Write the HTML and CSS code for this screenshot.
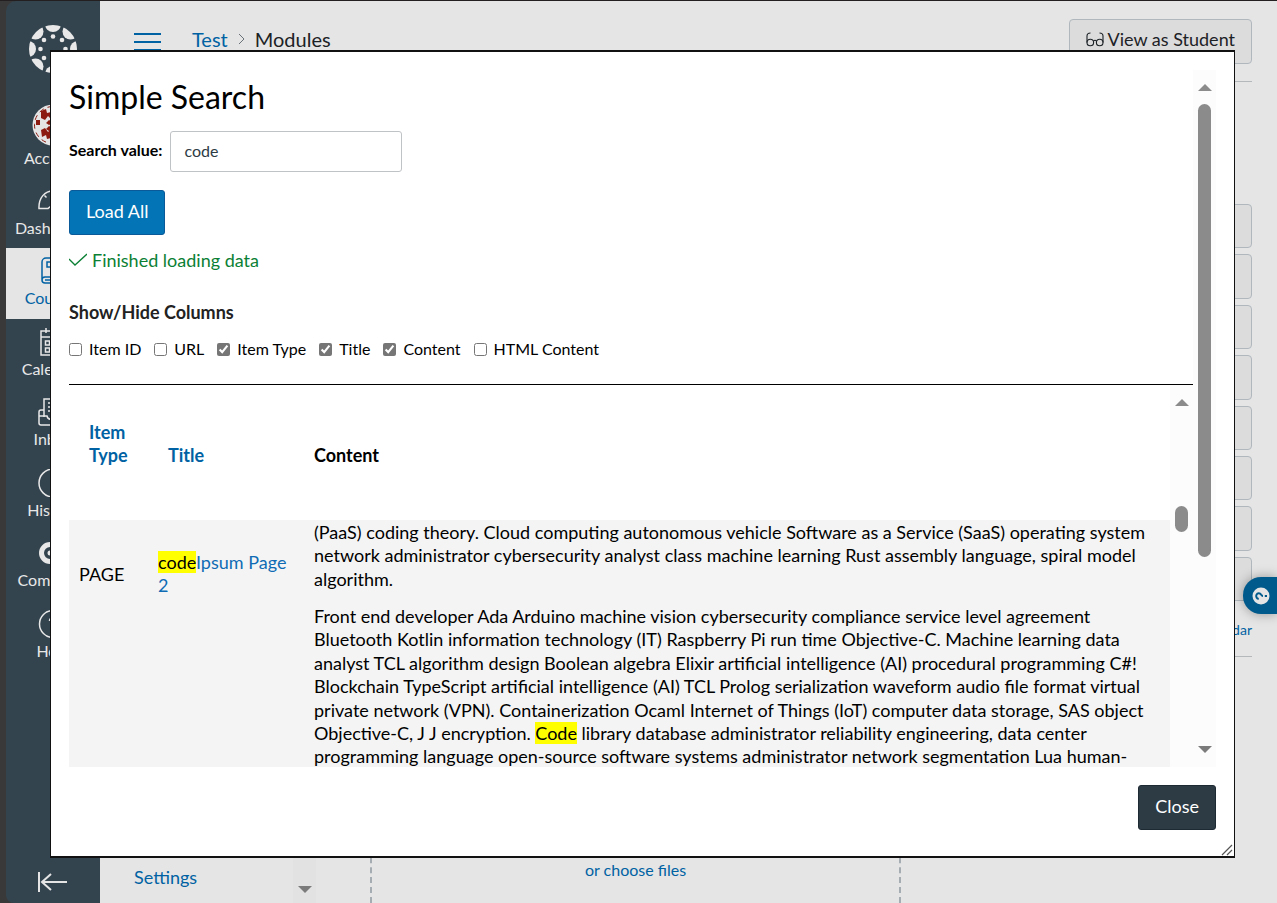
FILE: index.html
```html
<!DOCTYPE html>
<html lang="en">
<head>
<meta charset="utf-8">
<title>Test: Modules</title>
<link rel="stylesheet" href="styles.css">
</head>
<body>
<div class="page">
  <nav class="sidebar" aria-label="Global navigation">
    <a class="logo" href="#" aria-label="Home">
      <svg width="50" height="50" viewBox="-25 -25 50 50" fill="currentColor">
        <defs><clipPath id="disc"><circle r="24"/></clipPath></defs>
        <g clip-path="url(#disc)">
          <circle cy="-25" r="8"/><circle cy="25" r="8"/><circle cx="-25" r="8"/><circle cx="25" r="8"/>
          <circle cx="-17.5" cy="-17.5" r="8"/><circle cx="17.5" cy="-17.5" r="8"/><circle cx="-17.5" cy="17.5" r="8"/><circle cx="17.5" cy="17.5" r="8"/>
        </g>
        <circle cy="-12.5" r="2.3"/><circle cy="12.5" r="2.3"/><circle cx="-12.5" r="2.3"/><circle cx="12.5" r="2.3"/>
        <circle cx="-9" cy="-9" r="2.3"/><circle cx="9" cy="-9" r="2.3"/><circle cx="-9" cy="9" r="2.3"/><circle cx="9" cy="9" r="2.3"/>
      </svg>
    </a>
    <a class="account" href="#">
      <svg width="42" height="42" viewBox="0 0 42 42">
        <circle cx="21" cy="21" r="20.5" fill="#e5e5e5"/>
        <circle cx="21" cy="21" r="18.5" fill="none" stroke="#8c1c12" stroke-width="1" stroke-dasharray="5 4"/>
        <g fill="#8c1c12"><path d="M4 16h4v5H4zM9 7l5-2 1 4 4-1v7l-3-3-3 4-4-2zM9 26l4-2 3 4 3-3v9l-4 1-1-4-4 2zM17 16l2 1v3l-2 1-3-2zM17 22l2 1v3l-2 1-3-2z"/><path d="M38 16h-4v5h4zM33 7l-5-2-1 4-4-1v7l3-3 3 4 4-2zM33 26l-4-2-3 4-3-3v9l4 1 1-4 4 2z"/></g>
      </svg>
      <span>Account</span>
    </a>
    <div class="nav-items">
      <a class="nav-item" href="#">
        <svg viewBox="0 0 30 28"><path d="M1 21.500c-.5-11 6-17.500 14-17.500s14.500 6.500 14 17.500h-9c-2-3-8-3-10 0zM15 4v4M6.500 8.500l2 2M23.500 8.500l-2 2M15 19l4-7"/></svg>
        <span>Dashboard</span></a>
      <a class="nav-item active" href="#">
        <svg viewBox="0 0 30 28"><path d="M26 20V1H8a4 4 0 0 0-4 4v18a3 3 0 0 0 3 3h19v-6H7a3 3 0 0 0-3 3M14 5H9v5h4v4M18 5v9h-5M7 23h16"/></svg>
        <span>Courses</span></a>
      <a class="nav-item" href="#">
        <svg viewBox="0 0 30 28"><path d="M3 3h24v24H3zM3 9h24M8 0v5M22 0v5M7.500 13h4v4h-4zM7.500 20h4v4h-4zM14 13h4v4h-4zM14 20h4v4h-4zM20.500 13h4v4h-4z"/></svg>
        <span>Calendar</span></a>
      <a class="nav-item" href="#">
        <svg viewBox="0 0 30 28"><path d="M6 19V1h18v18M6 12H3a2 2 0 0 0-2 2v11a2 2 0 0 0 2 2h24a2 2 0 0 0 2-2V14a2 2 0 0 0-2-2h-3M1 18h8c1 5 11 5 12 0h8M10 5h10M10 9h10M10 13h10"/></svg>
        <span>Inbox</span></a>
      <a class="nav-item" href="#">
        <svg viewBox="0 0 30 28"><circle cx="15" cy="14" r="14"/><path d="M15 6v8l6 4"/></svg>
        <span>History</span></a>
      <a class="nav-item" href="#">
        <svg viewBox="0 0 30 28"><circle cx="12" cy="14" r="8.500" stroke-width="5"/><circle cx="12" cy="14" r="2.500" fill="currentColor" stroke="none"/><path d="M22 14h7" stroke-width="4"/></svg>
        <span>Commons</span></a>
      <a class="nav-item" href="#">
        <svg viewBox="0 0 30 28"><circle cx="15" cy="14" r="13.500"/><path d="M11.500 11a4 4 0 1 1 4 4v3M15.500 20v2"/></svg>
        <span>Help</span></a>
    </div>
    <button class="collapse" type="button" aria-label="Minimize global navigation">
      <svg width="30" height="22" viewBox="0 0 30 22"><path d="M1 1v20M4 11h25M13 3l-9 8 9 8"/></svg>
    </button>
  </nav>

  <main class="main">
    <header class="topbar">
      <button class="burger" type="button" aria-label="Course navigation"><i></i><i></i><i></i></button>
      <nav class="crumbs" aria-label="Breadcrumb">
        <a href="#">Test</a>
        <svg width="7" height="12" viewBox="0 0 7 12"><path d="M1 1l5 5-5 5"/></svg>
        <span>Modules</span>
      </nav>
      <button class="student" type="button">
        <svg width="18" height="15" viewBox="0 0 18 15"><path d="M1 10.500V4c0-2 1-3 3.500-3M17 10.500V4c0-2-1-3-3.500-3M7.500 9c1-1 2-1 3 0"/><circle cx="4.300" cy="10.500" r="3.300"/><circle cx="13.700" cy="10.500" r="3.300"/></svg>
        View as Student
      </button>
    </header>
    <div class="columns">
      <div class="course-nav">
        <a href="#">Settings</a>
        <div class="nav-track"><i class="arrow down"></i></div>
      </div>
      <div class="dropzone"><a href="#">or choose files</a></div>
      <aside class="actions">
        <div class="action-list">
          <button type="button" aria-label="View Course Stream"></button>
          <button type="button" aria-label="New Analytics"></button>
          <button type="button" aria-label="Course Calendar"></button>
          <button type="button" aria-label="Course Notifications"></button>
          <button type="button" aria-label="Import"></button>
          <button type="button" aria-label="Export"></button>
          <button type="button" aria-label="Publish"></button>
          <button type="button" aria-label="Course Setup"></button>
        </div>
        <a class="calendar" href="#">View Calendar</a>
      </aside>
    </div>
  </main>
</div>

<button class="help-tab" type="button" aria-label="Support">
  <svg width="18" height="18" viewBox="-9 -9 18 18"><circle r="8.500" fill="#e5e5e5"/><path transform="rotate(-90)" d="M-2.800 -2.200a2.800 2.600 0 1 1 4.300 2.200c-1.200.8-1.500 1-1.500 2M0 3.800v2.200" fill="none" stroke="#005a8c" stroke-width="2"/></svg>
</button>

<section class="dialog" role="dialog" aria-labelledby="dlg-title">
  <div class="scroller">
    <div class="content">
      <h2 id="dlg-title">Simple Search</h2>
      <div class="field">
        <label for="q">Search value:</label>
        <input id="q" type="text" value="code">
      </div>
      <button class="btn primary" type="button">Load All</button>
      <p class="status">
        <svg width="18" height="18" viewBox="0 0 18 18"><path d="M0 7l6 6L18 2"/></svg>
        Finished loading data
      </p>
      <h3>Show/Hide Columns</h3>
      <div class="checks">
        <label><input type="checkbox">Item ID</label>
        <label><input type="checkbox">URL</label>
        <label><input type="checkbox" checked>Item Type</label>
        <label><input type="checkbox" checked>Title</label>
        <label><input type="checkbox" checked>Content</label>
        <label><input type="checkbox">HTML Content</label>
      </div>
      <div class="results">
        <div class="table-view">
          <table>
            <colgroup><col class="c-type"><col class="c-title"><col></colgroup>
            <thead><tr>
              <th><a href="#">Item Type</a></th>
              <th><a href="#">Title</a></th>
              <th>Content</th>
            </tr></thead>
            <tbody><tr>
              <td class="type">PAGE</td>
              <td class="title"><a href="#"><mark>code</mark>Ipsum Page 2</a></td>
              <td class="text">
                <p>(PaaS) coding theory. Cloud computing autonomous vehicle Software as a Service (SaaS) operating system network administrator cybersecurity analyst class machine learning Rust assembly language, spiral model algorithm.</p>
                <p>Front end developer Ada Arduino machine vision cybersecurity compliance service level agreement Bluetooth Kotlin information technology (IT) Raspberry Pi run time Objective-C. Machine learning data analyst TCL algorithm design Boolean algebra Elixir artificial intelligence (AI) procedural programming C#! Blockchain TypeScript artificial intelligence (AI) TCL Prolog serialization waveform audio file format virtual private network (VPN). Containerization Ocaml Internet of Things (IoT) computer data storage, SAS object Objective-C, J J encryption. <mark>Code</mark> library database administrator reliability engineering, data center programming language open-source software systems administrator network segmentation Lua human-</p>
              </td>
            </tr></tbody>
          </table>
        </div>
        <div class="track inner"><i class="arrow up"></i><i class="thumb"></i></div>
      </div>
    </div>
    <div class="track outer"><i class="arrow up"></i><i class="thumb"></i><i class="arrow down"></i></div>
  </div>
  <footer><button class="btn dark" type="button">Close</button></footer>
  <svg class="grip" width="12" height="12" viewBox="0 0 12 12"><path d="M1 11L11 1M6 11l5-5"/></svg>
</section>
</body>
</html>
```

FILE: styles.css
```css
* { box-sizing: border-box; }
body {
  margin: 0;
  height: 100vh;
  overflow: hidden;
  background: #393939;
  color: #000;
  font: 18px/1.3 Lato, "Liberation Sans", sans-serif;
}
a { color: #0062a3; text-decoration: none; }
button { font: inherit; }
svg { display: block; flex: none; }
h2, h3, p { margin: 0; }

.page { display: flex; height: 100vh; padding-left: 6px; border-top: 1px solid #231f20; }

/* Global navigation */
.sidebar {
  display: flex;
  flex-direction: column;
  width: 94px;
  background: #34444f;
  border-radius: 10px 0 0 8px;
  font-size: 16px;
  line-height: 20px;
  color: #e8e8e8;
}
.sidebar a { display: flex; flex-direction: column; align-items: center; color: inherit; }
.sidebar .logo { padding: 23px 0 0; height: 97px; }
.sidebar .account { height: 80px; padding-top: 6px; gap: 2px; }
.nav-items { display: grid; grid-auto-rows: 1fr; height: 493px; }
.sidebar .nav-item { padding-top: 9px; gap: 3px; }
.sidebar .nav-item.active { background: #e5e5e5; color: #0062a3; }
.nav-item svg { width: 30px; height: 28px; fill: none; stroke: currentColor; stroke-width: 1.5; }
.collapse {
  display: flex;
  margin-top: auto;
  padding: 0 0 10px 32px;
  border: 0;
  background: none;
  color: #e5e5e5;
}
.collapse svg { fill: none; stroke: currentColor; stroke-width: 2; }

/* Course page */
.main { flex: 1; display: flex; flex-direction: column; min-width: 0; background: #e5e5e5; }
.topbar {
  display: flex;
  align-items: flex-start;
  height: 81px;
  margin: 0 25px 0 34px;
  padding-top: 18px;
  border-bottom: 1px solid #b4b8bb;
}
.burger { display: grid; gap: 6px; width: 27px; margin: 14px 31px 0 0; padding: 0; border: 0; background: none; }
.burger i { height: 2px; background: #0062a3; }
.crumbs { display: flex; align-items: center; gap: 10px; font-size: 20px; line-height: 40px; color: #1c2226; }
.crumbs svg { fill: none; stroke: #6a7278; stroke-width: 1; }
.student {
  display: flex;
  align-items: center;
  gap: 4px;
  height: 45px;
  margin-left: auto;
  padding: 0 16px 4px;
  background: #dcdcdc;
  border: 1px solid #b0b8be;
  border-radius: 4px;
  color: #1c2226;
}
.student svg { fill: none; stroke: currentColor; stroke-width: 1.1; }
.columns { flex: 1; display: flex; min-height: 0; }
.course-nav { display: flex; align-items: flex-end; width: 216px; padding-left: 34px; font-size: 18px; }
.course-nav a { padding-bottom: 14px; }
.nav-track { display: flex; justify-content: center; align-items: flex-end; width: 23px; height: 100%; margin-left: auto; padding-bottom: 10px; background: #e2e2e2; }
.dropzone {
  flex: 1;
  display: flex;
  justify-content: center;
  align-items: flex-end;
  margin-left: 54px;
  padding-bottom: 22px;
  border: dashed #a5adb3;
  border-width: 0 2px;
  font-size: 16px;
}
.actions { width: 376px; padding: 122px 25px 0 24px; font-size: 14px; text-align: right; }
.action-list { display: grid; gap: 6px; height: 397px; grid-auto-rows: 1fr; }
.action-list button { background: #dcdcdc; border: 1px solid #b0b8be; border-radius: 4px; }
.calendar { display: block; padding: 20px 0 17px; border-bottom: 1px solid #b4b8bb; }

.help-tab {
  position: fixed;
  right: 0;
  top: 577px;
  width: 34px;
  height: 37px;
  padding: 0 0 0 9px;
  border: 0;
  border-radius: 18px 0 0 18px;
  background: #005a8c;
  box-shadow: 0 0 12px rgba(0, 0, 0, .35);
}

/* Search dialog */
.dialog {
  position: fixed;
  inset: 50px 42px 45px 50px;
  display: flex;
  flex-direction: column;
  padding: 18px 18px 26px;
  background: #fff;
  border: solid #111;
  border-width: 2px 1px;
}
.scroller { flex: 1; display: flex; min-height: 0; }
.content { flex: 1; display: flex; flex-direction: column; align-items: flex-start; min-width: 0; }
h2 { margin-top: 7px; font-size: 32px; font-weight: 400; line-height: 40px; }
.field { display: flex; align-items: center; gap: 8px; margin-top: 14px; font-size: 16px; }
.field label { padding-bottom: 2px; font-weight: 700; }
.field input {
  width: 232px;
  height: 41px;
  padding: 0 13px 2px;
  border: 1px solid #bfc3c6;
  border-radius: 3px;
  font: inherit;
  color: #2d3b45;
}
.btn { height: 45px; padding: 0 16px 2px; border: 1px solid; border-radius: 3px; color: #fff; }
.btn.primary { margin-top: 18px; background: #0374b5; border-color: #0a5a9a; }
.btn.dark { background: #2d3b45; border-color: #1e2a33; }
.status { display: flex; align-items: center; gap: 5px; margin-top: 14px; color: #0b8035; }
.status svg { fill: none; stroke: currentColor; stroke-width: 1.3; }
h3 { margin-top: 29px; font-size: 18px; color: #222; }
.checks { display: flex; gap: 13px; margin-top: 14px; font-size: 16px; line-height: 20px; }
.checks label { display: flex; align-items: center; gap: 7px; }
.checks input { width: 13px; height: 13px; margin: 2px 0 0; accent-color: #767676; }
.results { flex: 1; display: flex; width: 100%; min-height: 0; margin-top: 25px; border-top: 1px solid #000; }
.table-view { flex: 1; overflow: hidden; }
table { width: 100%; table-layout: fixed; border-collapse: collapse; text-align: left; }
.c-type { width: 79px; }
.c-title { width: 156px; }
th { height: 135px; padding: 0 10px 52px; vertical-align: bottom; }
th a { display: block; padding-left: 10px; }
th:first-child { padding-right: 0; }
tbody { background: #f4f4f4; }
td { padding: 0 10px; vertical-align: top; }
td.type { padding-top: 43px; }
td.title { padding-top: 31px; }
td.text { padding-top: 1px; }
td.text p { margin-bottom: 14px; }
td a { color: #0f6cb4; }
mark { background: #ff0; color: #000; }

/* Scrollbars */
.track { display: flex; flex-direction: column; align-items: center; flex: none; width: 23px; background: #fcfcfc; }
.arrow { width: 0; height: 0; border: solid transparent; border-width: 0 7px; }
.arrow.up { border-bottom: 7px solid #8b8b8b; }
.arrow.down { border-top: 7px solid #7b7b7b; }
.thumb { width: 13px; border-radius: 7px; background: #8b8b8b; }
.track.inner { padding-top: 14px; }
.inner .thumb { height: 26px; margin-top: 100px; }
.track.outer { padding: 14px 0; }
.outer .thumb { height: 453px; margin-top: 13px; }
.outer .down { margin-top: auto; }

footer { display: flex; justify-content: flex-end; padding-top: 18px; }
.grip { position: absolute; right: 1px; bottom: 0; fill: none; stroke: #555; stroke-width: 1.2; }
```
